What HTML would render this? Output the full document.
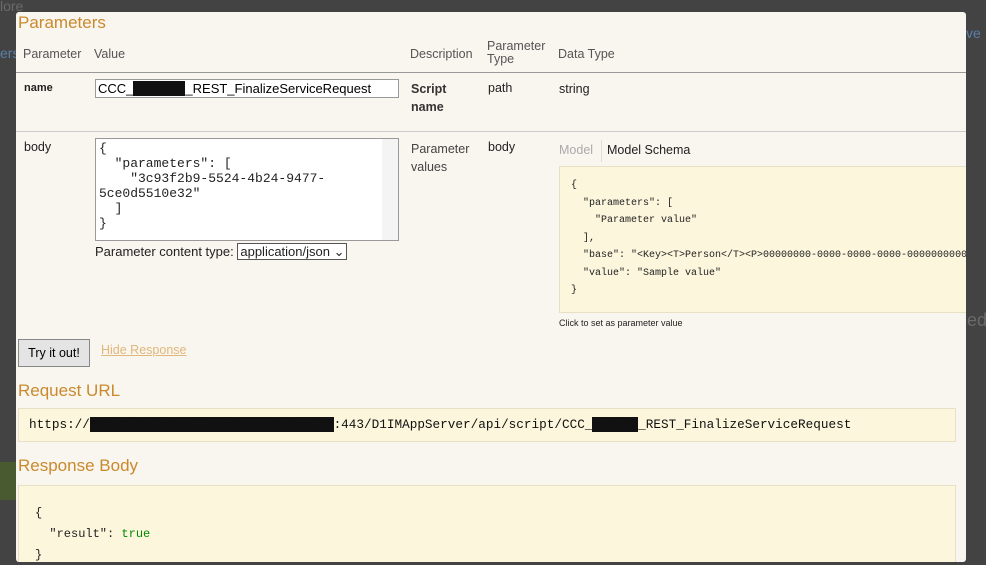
<!DOCTYPE html>
<html><head><meta charset="utf-8"><style>
*{box-sizing:border-box}
body{margin:0;width:986px;height:565px;overflow:hidden;background:#434343;font-family:"Liberation Sans",sans-serif;position:relative}
.bgtxt{position:absolute;color:#6a6a6a;font-size:14px}
.modal{position:absolute;left:16px;top:12px;width:950px;height:550px;background:#f9f5ef;border-radius:3px;overflow:hidden}
.h{position:absolute;color:#c98a2e;font-size:17px}
.th{position:absolute;color:#555;font-size:12.5px}
.line{position:absolute;left:0;right:0;height:1px;background:#bbb}
.t{position:absolute;font-size:12.5px;color:#222}
.mono{font-family:"Liberation Mono",monospace}
.box{position:absolute;background:#fcf6dc;border:1px solid #e8e0c4}
</style></head><body>
<div class="bgtxt" style="left:0;top:-2px">lore</div>
<div class="bgtxt" style="left:0;top:45px;color:#5a7fa8">ers</div>
<div class="bgtxt" style="left:966px;top:25px;color:#5a7fa8">ve</div>
<div class="bgtxt" style="left:967px;top:310px;font-size:18px">ed</div>
<div style="position:absolute;left:0;top:462px;width:16px;height:38px;background:#4a5a30"></div>
<div class="modal">
<div class="h" style="left:2px;top:1px">Parameters</div>
<div class="th" style="left:7px;top:35px">Parameter</div>
<div class="th" style="left:78px;top:35px">Value</div>
<div class="th" style="left:394px;top:35px">Description</div>
<div class="th" style="left:471px;top:28px;line-height:13px">Parameter<br>Type</div>
<div class="th" style="left:542px;top:35px">Data Type</div>
<div class="line" style="top:60px;background:#999"></div>
<div class="t" style="left:8px;top:70px;font-weight:bold;font-size:11px">name</div>
<div style="position:absolute;left:79px;top:67px;width:304px;height:19px;border:1px solid #999;background:#fff;font-size:13px;padding:1px 2px;color:#000">CCC_<span style="background:#111;color:#111">xxxxxxxx</span>_REST_FinalizeServiceRequest</div>
<div class="t" style="left:395px;top:68px;font-weight:bold;line-height:18px;color:#333">Script<br>name</div>
<div class="t" style="left:472px;top:69px">path</div>
<div class="t" style="left:543px;top:70px">string</div>
<div class="line" style="top:119px;background:#ccc"></div>
<div class="t" style="left:8px;top:128px">body</div>
<div class="mono" style="position:absolute;left:79px;top:126px;width:304px;height:103px;border:1px solid #999;background:#fff;font-size:13px;line-height:15px;padding:2px 3px;color:#222;white-space:pre;overflow:hidden">{
  "parameters": [
    "3c93f2b9-5524-4b24-9477-
5ce0d5510e32"
  ]
}</div>
<div style="position:absolute;left:366px;top:127px;width:16px;height:101px;background:#f4f4f4"></div>
<div class="t" style="left:79px;top:232px;font-size:13px">Parameter content type: <span style="border:1px solid #555;background:#fff;padding:0 2px">application/json ⌄</span></div>
<div class="t" style="left:395px;top:128px;line-height:18px;color:#444">Parameter<br>values</div>
<div class="t" style="left:472px;top:128px">body</div>
<div class="t" style="left:543px;top:131px;color:#aaa">Model</div>
<div style="position:absolute;left:585px;top:128px;width:1px;height:22px;background:#ddd"></div>
<div class="t" style="left:591px;top:131px">Model Schema</div>
<div class="box mono" style="left:543px;top:154px;width:420px;height:147px;font-size:10px;line-height:17.5px;padding:10px 11px;white-space:pre;color:#222;overflow:hidden">{
  "parameters": [
    "Parameter value"
  ],
  "base": "&lt;Key&gt;&lt;T&gt;Person&lt;/T&gt;&lt;P&gt;00000000-0000-0000-0000-000000000000
  "value": "Sample value"
}</div>
<div class="t" style="left:543px;top:306px;font-size:9px">Click to set as parameter value</div>
<div style="position:absolute;left:2px;top:327px;width:72px;height:28px;background:#e4e4e4;border:1px solid #888;font-size:12.5px;text-align:center;line-height:26px">Try it out!</div>
<div class="t" style="left:85px;top:331px;color:#e0b77c;text-decoration:underline">Hide Response</div>
<div class="h" style="left:2px;top:369px">Request URL</div>
<div class="box mono" style="left:2px;top:396px;width:938px;height:34px;font-size:12.7px;padding:8px 10px;color:#111;white-space:nowrap;overflow:hidden">https://<span style="background:#111">scv-1-xx-xxxxx.xxxxxxxxxxxxxx.de</span>:443/D1IMAppServer/api/script/CCC_<span style="background:#111">xxxxxx</span>_REST_FinalizeServiceRequest</div>
<div class="h" style="left:2px;top:444px">Response Body</div>
<div class="box mono" style="left:2px;top:473px;width:938px;height:90px;font-size:12px;line-height:21px;padding:17px 16px;white-space:pre;color:#222">{
  "result": <span style="color:#080">true</span>
}</div>
</div>
</body></html>
